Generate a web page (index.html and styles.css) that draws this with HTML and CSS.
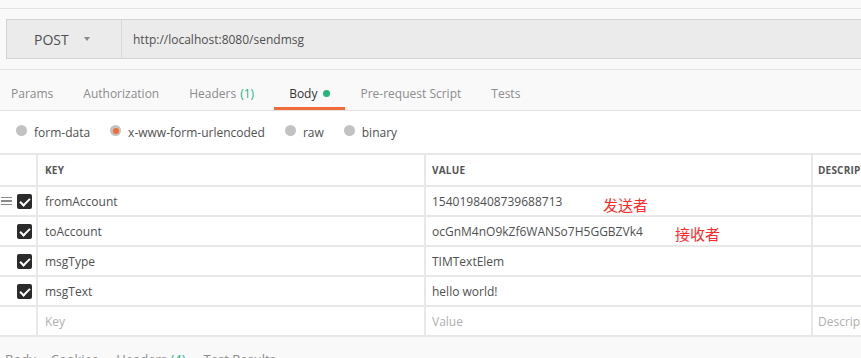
FILE: index.html
```html
<!DOCTYPE html>
<html lang="zh">
<head>
    <meta charset="UTF-8">
    <title>POST sendmsg</title>
    <link rel="stylesheet" href="styles.css">
</head>
<body>

    <div class="top-strip"></div>

    <div class="request-bar">
        <div class="method">
            POST
            <span class="caret"></span>
        </div>
        <div class="url">http://localhost:8080/sendmsg</div>
    </div>

    <div class="tabs">
        <div class="tab first">Params</div>
        <div class="tab">Authorization</div>
        <div class="tab headers">Headers <span class="count">(1)</span></div>
        <div class="tab active">Body <span class="dot"></span></div>
        <div class="tab">Pre-request Script</div>
        <div class="tab">Tests</div>
    </div>

    <div class="body-panel">
        <div class="body-types">
            <label class="radio"><span class="circle"></span>form-data</label>
            <label class="radio selected"><span class="circle"></span>x-www-form-urlencoded</label>
            <label class="radio"><span class="circle"></span>raw</label>
            <label class="radio"><span class="circle"></span>binary</label>
        </div>

        <div class="kv-wrap">
            <div class="kv-table">
                <div class="cell"></div>
                <div class="cell head">KEY</div>
                <div class="cell head value">VALUE</div>
                <div class="cell head desc">DESCRIPTION</div>

                <div class="cell check-cell">
                    <span class="handle"><i></i><i></i><i></i></span>
                    <span class="check"></span>
                </div>
                <div class="cell">fromAccount</div>
                <div class="cell value">1540198408739688713</div>
                <div class="cell desc"></div>

                <div class="cell check-cell"><span class="check"></span></div>
                <div class="cell">toAccount</div>
                <div class="cell value">ocGnM4nO9kZf6WANSo7H5GGBZVk4</div>
                <div class="cell desc"></div>

                <div class="cell check-cell"><span class="check"></span></div>
                <div class="cell">msgType</div>
                <div class="cell value">TIMTextElem</div>
                <div class="cell desc"></div>

                <div class="cell check-cell"><span class="check"></span></div>
                <div class="cell">msgText</div>
                <div class="cell value">hello world!</div>
                <div class="cell desc"></div>

                <div class="cell"></div>
                <div class="cell placeholder">Key</div>
                <div class="cell value placeholder">Value</div>
                <div class="cell desc placeholder">Description</div>
            </div>

            <!-- hand-written notes on top of the screenshot -->
            <span class="note note-sender">发送者</span>
            <span class="note note-receiver">接收者</span>
        </div>
    </div>

    <div class="response-tabs">
        <span>Body</span>
        <span>Cookies</span>
        <span class="wide">Headers <em>(4)</em></span>
        <span class="wide">Test Results</span>
    </div>

</body>
</html>
```

FILE: styles.css
```css
body {
    margin: 0;
    background-color: #f9f9f9;
    font-family: "Open Sans", "Noto Sans", sans-serif;
    font-size: 12px;
    color: #505050;
    overflow: hidden;
}
.top-strip {
    height: 8px;
    border-bottom: 1px solid #e3e3e3;
}
.request-bar {
    display: flex;
    height: 38px;
    margin: 10px 0 0 6px;
    background-color: #ebebeb;
    border: 1px solid #d4d4d4;
    border-right: none;
}
.method {
    display: flex;
    align-items: center;
    width: 87px;
    padding-left: 27px;
    font-size: 14px;
    color: #505050;
    border-right: 1px solid #d9d9d9;
}
.caret {
    width: 0;
    height: 0;
    margin-left: 15px;
    border-left: 3.5px solid transparent;
    border-right: 3.5px solid transparent;
    border-top: 4px solid #8a8a8a;
}
.url {
    display: flex;
    align-items: center;
    padding-left: 11px;
    color: #505050;
}
.tabs {
    display: flex;
    height: 40px;
    margin-top: 10px;
    border-top: 1px solid #e3e3e3;
    border-bottom: 1px solid #e3e3e3;
}
.tab {
    display: flex;
    align-items: center;
    box-sizing: border-box;
    height: 40px;
    padding: 10px 15px 0;
    color: #8c8c8c;
    font-size: 12px;
    border-bottom: 3px solid transparent;
}
.tab.first {
    padding-left: 11px;
}
.tab.headers {
    padding-right: 20px;
}
.tab.active {
    color: #333;
    border-bottom-color: #f26b3a;
}
.count {
    color: #26b47f;
    margin-left: 4px;
}
.dot {
    width: 7px;
    height: 7px;
    margin-left: 6px;
    border-radius: 50%;
    background-color: #26b47f;
}
.body-panel {
    background-color: #ffffff;
}
.body-types {
    display: flex;
    gap: 20px;
    height: 42px;
    padding-left: 16px;
    align-items: center;
}
.radio {
    display: flex;
    align-items: center;
    color: #505050;
}
.circle {
    width: 11px;
    height: 11px;
    margin-right: 7px;
    margin-top: -3px;
    border-radius: 50%;
    background-color: #c2c2c2;
    display: flex;
    align-items: center;
    justify-content: center;
}
.radio.selected .circle::after {
    content: "";
    width: 6px;
    height: 6px;
    border-radius: 50%;
    background-color: #f26b3a;
}
.kv-wrap {
    position: relative;
}
.kv-table {
    display: grid;
    grid-template-columns: 36px 386px 385px 100px;
    grid-template-rows: 30px repeat(5, 28px);
    gap: 2px;
    padding: 2px 0;
    background-color: #e8e8e8;
}
.cell {
    background-color: #ffffff;
    display: flex;
    align-items: center;
    padding-left: 7px;
    white-space: nowrap;
    overflow: hidden;
}
.cell.value {
    padding-left: 6px;
}
.cell.desc {
    padding-left: 5px;
}
.head {
    font-size: 10px;
    font-weight: 700;
    color: #555;
    letter-spacing: 0.2px;
}
.placeholder {
    color: #b0b0b0;
}
.check-cell {
    justify-content: flex-end;
    padding: 0 4px 0 0;
}
.check {
    position: relative;
    width: 15px;
    height: 15px;
    border-radius: 2px;
    background-color: #2b2b2b;
}
.check::after {
    content: "";
    position: absolute;
    left: 5px;
    top: 2px;
    width: 4px;
    height: 8px;
    border: solid #ffffff;
    border-width: 0 2px 2px 0;
    transform: rotate(45deg);
}
.handle {
    display: flex;
    flex-direction: column;
    gap: 2px;
    margin-right: 5px;
}
.handle i {
    display: block;
    width: 11px;
    height: 1.5px;
    background-color: #8a8a8a;
}
.note {
    position: absolute;
    font-family: "Noto Sans CJK SC", sans-serif;
    font-size: 15px;
    color: #ff2a2a;
    line-height: 16px;
}
.note-sender {
    left: 603px;
    top: 44px;
}
.note-receiver {
    left: 675px;
    top: 73px;
}
.response-tabs {
    display: flex;
    gap: 15px;
    padding: 13px 0 0 5px;
    font-size: 13px;
    color: #8c8c8c;
}
.response-tabs .wide {
    margin-left: 3px;
}
.response-tabs em {
    font-style: normal;
    color: #26b47f;
}
```
